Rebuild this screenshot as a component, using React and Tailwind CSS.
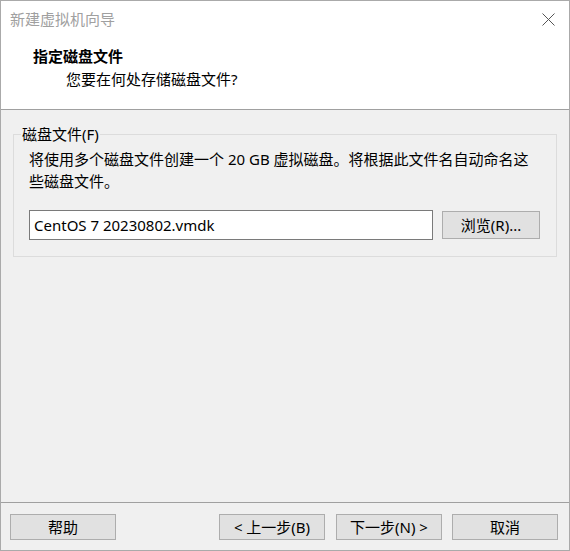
import React from 'react';

const font = "font-['Segoe_UI','Noto_Sans','Noto_Sans_CJK_SC',sans-serif]";

const Btn = ({ children, className = 'w-[106px] h-[26px]' }) => (
    <button
        className={`bg-[#e1e1e1] border border-[#adadad] text-[15px] leading-none text-black flex items-center justify-center ${className}`}
    >
        {children}
    </button>
);

const App = () => {
    return (
        <div className={`w-[570px] h-[551px] border border-[#aaaaaa] flex flex-col bg-[#f0f0f0] ${font} text-black`}>
            {/* Title bar + header */}
            <div className="bg-white border-b border-[#a0a0a0] h-[109px] flex flex-col">
                <div className="h-[36px] flex items-center justify-between pl-[9px] pr-[14px]">
                    <span className="text-[15px] text-[#a0a0a0]">新建虚拟机向导</span>
                    <svg width="13" height="13" viewBox="0 0 13 13" className="mt-[1px]">
                        <path d="M0.5 0.5 L12.5 12.5 M12.5 0.5 L0.5 12.5" stroke="#555" strokeWidth="1" fill="none" />
                    </svg>
                </div>
                <div className="pl-[32px] pt-[8px]">
                    <p className="text-[15px] font-bold leading-[22px]">指定磁盘文件</p>
                    <p className="text-[15px] leading-[22px] pl-[33px] mt-[1px]">您要在何处存储磁盘文件?</p>
                </div>
            </div>

            {/* Body */}
            <div className="flex-1 px-[12px] pt-[14px]">
                <fieldset className="border border-[#dcdcdc] pl-[15px] pr-[15px] pt-[4px] pb-[16px]">
                    <legend className="text-[15px] leading-[20px] -ml-[8px] px-[1px]">磁盘文件(F)</legend>
                    <p className="text-[15px] leading-[22px]">
                        将使用多个磁盘文件创建一个 20 GB 虚拟磁盘。将根据此文件名自动命名这<br />些磁盘文件。
                    </p>
                    <div className="flex items-center gap-[9px] mt-[18px]">
                        <div className="w-[404px] h-[30px] bg-white border border-[#7a7a7a] flex items-center pl-[4px] text-[15px]">
                            CentOS 7 20230802.vmdk
                        </div>
                        <Btn className="w-[98px] h-[28px]">浏览(R)...</Btn>
                    </div>
                </fieldset>
            </div>

            {/* Footer */}
            <div className="border-t border-[#a0a0a0] h-[48px] flex items-start pt-[11px] pl-[9px] pr-[11px]">
                <Btn>帮助</Btn>
                <div className="flex-1" />
                <Btn>&lt; 上一步(B)</Btn>
                <Btn className="w-[106px] h-[26px] ml-[11px]">下一步(N) &gt;</Btn>
                <Btn className="w-[106px] h-[26px] ml-[10px]">取消</Btn>
            </div>
        </div>
    );
};

export default App;
